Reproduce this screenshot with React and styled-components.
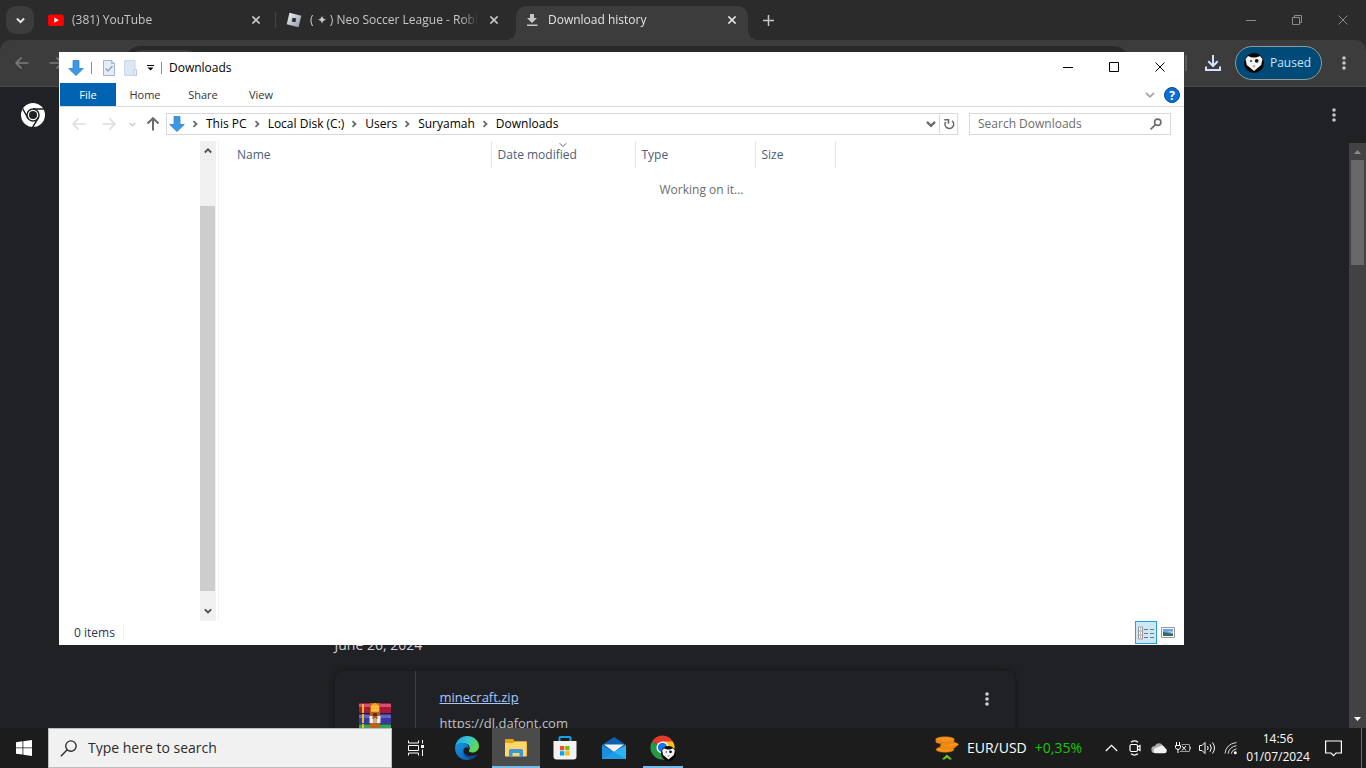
import React from "react";
import styled, { createGlobalStyle } from "styled-components";

const GlobalStyle = createGlobalStyle`
  * {
    box-sizing: border-box;
  }
  body {
    margin: 0;
    background: #202124;
    font-family: "Open Sans", "Noto Sans", sans-serif;
    font-size: 11px;
    line-height: 16px;
  }
  button, input {
    font: inherit;
    color: inherit;
    border: 0;
    padding: 0;
    margin: 0;
    background: none;
  }
  svg {
    display: block;
    flex: none;
  }
`;

const Desktop = styled.div`
  height: 100vh;
  display: flex;
  flex-direction: column;
  overflow: hidden;
`;

/* ---------- browser ---------- */

const Browser = styled.main`
  position: relative;
  flex: 1;
  min-height: 0;
  display: flex;
  flex-direction: column;
  background: #2b2b2b;
`;

const TabStrip = styled.header`
  height: 40px;
  flex: none;
  display: flex;
  align-items: flex-end;
  padding-left: 6px;
`;

const TabSearch = styled.button`
  width: 28px;
  height: 28px;
  margin: 0 6px 6px 0;
  border-radius: 10px;
  background: #3c3c3c;
  color: #e3e3e3;
  display: grid;
  place-items: center;
`;

const Tab = styled.div`
  position: relative;
  width: 232px;
  height: 34px;
  margin-right: 6px;
  padding: 0 8px 6px;
  display: flex;
  align-items: center;
  gap: 8px;
  font-size: 12px;
  color: ${(p) => (p.$active ? "#e3e3e3" : "#c7c7c7")};
  background: ${(p) => (p.$active ? "#3c3c3c" : "transparent")};
  border-radius: 10px 10px 0 0;

  ${(p) => p.$active && `
    &::before, &::after {
      content: "";
      position: absolute;
      bottom: 0;
      width: 10px;
      height: 10px;
    }
    &::before {
      right: 100%;
      background: radial-gradient(circle at 0 0, transparent 10px, #3c3c3c 10px);
    }
    &::after {
      left: 100%;
      background: radial-gradient(circle at 100% 0, transparent 10px, #3c3c3c 10px);
    }
  `}
`;

const TabTitle = styled.span`
  flex: 1;
  overflow: hidden;
  white-space: nowrap;
  mask-image: linear-gradient(to right, #000 90%, transparent);
`;

const TabDivider = styled.span`
  width: 1px;
  height: 16px;
  margin: 0 2px 12px -3px;
  background: #444444;
`;

const IconButton = styled.button`
  width: ${(p) => p.$w || 16}px;
  height: ${(p) => p.$h || 16}px;
  flex: none;
  display: grid;
  place-items: center;
`;

const NewTab = styled(IconButton)`
  margin-bottom: 6px;
`;

const Caption = styled.div`
  display: flex;
  align-self: flex-start;
  margin-left: auto;
  color: ${(p) => p.$color};
`;

const Toolbar = styled.nav`
  height: 47px;
  flex: none;
  display: flex;
  align-items: center;
  padding: 0 5px;
  background: #3c3c3c;
  border-bottom: 1px solid #4c4c4c;
  border-radius: 10px 10px 0 0;
  color: #7c7c7c;
`;

const Omnibox = styled.div`
  flex: 1;
  min-width: 0;
  height: 34px;
  margin: 0 39px 0 17px;
  padding: 0 5px;
  display: flex;
  align-items: center;
  border-radius: 17px;
  background: #282828;

  input {
    flex: 1;
    min-width: 0;
  }
`;

const SiteChip = styled.button`
  width: 70px;
  height: 26px;
  border-radius: 13px;
  background: #3c3c3c;
`;

const ToolbarDivider = styled.span`
  width: 2px;
  height: 16px;
  margin: 0 9px 0 16px;
  background: #5a5a5a;
`;

const Profile = styled.button`
  height: 34px;
  margin: 0 5px;
  padding: 0 10px 0 8px;
  display: flex;
  align-items: center;
  gap: 6px;
  border: 1px solid #8f9c9c;
  border-radius: 17px;
  background: #004a77;
  color: #c2e7ff;
  font-size: 12px;
`;

const PageBar = styled.div`
  height: 56px;
  flex: none;
  display: flex;
  align-items: center;
  justify-content: space-between;
  padding: 0 24px 0 21px;
  background: #202124;
  color: #c0c3c6;
`;

const PageBody = styled.div`
  flex: 1;
  min-height: 0;
  display: flex;
  background: #202124;
`;

const History = styled.section`
  flex: 1;
  overflow: hidden;
  display: flex;
  flex-direction: column;
  align-items: center;
  padding-top: 492px;
`;

const HistoryGroup = styled.div`
  width: 100%;
  max-width: 680px;
  color: #d0d2d5;
`;

const GroupDate = styled.h2`
  margin: 0 0 16px;
  font-size: 14px;
  font-weight: 400;
  line-height: 20px;
`;

const Card = styled.article`
  display: flex;
  height: 96px;
  border-radius: 8px;
  box-shadow: 0 0 5px #141518;
`;

const CardIcon = styled.div`
  width: 81px;
  display: grid;
  place-items: center;
  border-right: 1px solid #3f4043;
`;

const CardText = styled.div`
  flex: 1;
  padding: 16px 24px;
  display: flex;
  flex-direction: column;
  gap: 6px;
  font-size: 13px;
  line-height: 20px;
  color: #bdc1c6;
`;

const FileLink = styled.a`
  color: #a8c7fa;
  align-self: flex-start;
`;

const CardMenu = styled(IconButton)`
  margin: 16px 16px 0 0;
`;

const PageScroll = styled.div`
  width: 17px;
  display: flex;
  flex-direction: column;
  align-items: center;
  background: #424242;
`;

const PageThumb = styled.div`
  width: 13px;
  height: 105px;
  margin-bottom: auto;
  background: #686868;
`;

/* ---------- explorer window ---------- */

const Window = styled.section`
  position: absolute;
  inset: 52px 182px 83px 59px;
  display: flex;
  flex-direction: column;
  background: #ffffff;
  color: #000000;
`;

const TitleBar = styled.header`
  height: 31px;
  flex: none;
  display: flex;
  align-items: center;
  padding: 0 1px 0 9px;
`;

const Rule = styled.span`
  width: 1px;
  height: 12px;
  background: #8a8a8a;
  margin: ${(p) => p.$m};
`;

const WindowTitle = styled.span`
  margin-left: 7px;
  font-size: 12px;
`;

const Ribbon = styled.nav`
  height: 24px;
  flex: none;
  display: flex;
  align-items: center;
  padding: 0 4px 0 1px;
  border-bottom: 1px solid #dadbdc;
`;

const RibbonTab = styled.button`
  height: 23px;
  min-width: 58px;
  padding: 0 13px;
  color: #333333;
`;

const FileTab = styled(RibbonTab)`
  min-width: 56px;
  background: #0063b1;
  color: #ffffff;
`;

const RibbonEnd = styled.div`
  margin-left: auto;
  display: flex;
  align-items: center;
  gap: 9px;
  color: #a0a0a0;
`;

const AddressRow = styled.div`
  height: 34px;
  flex: none;
  display: flex;
  align-items: center;
  padding: 0 13px 0 12px;
`;

const NavButtons = styled.div`
  display: flex;
  align-items: center;
  gap: 11px;
  margin-left: 14px;
  color: #cccccc;
`;

const UpButton = styled(IconButton)`
  margin-left: 9px;
`;

const AddressBox = styled.div`
  flex: 1;
  height: 22px;
  margin: 0 11px 0 5px;
  padding-left: 2px;
  display: flex;
  align-items: center;
  border: 1px solid #d9d9d9;
  color: #6b6b6b;
`;

const CrumbLink = styled.a`
  margin: 0 0 0 6px;
  display: flex;
  align-items: center;
  gap: 7px;
  text-decoration: none;
  font-size: 12px;
  color: #6b6b6b;

  span {
    color: #000000;
  }
`;

const AddressEnd = styled.div`
  margin-left: auto;
  display: flex;
`;

const Refresh = styled(IconButton)`
  border-left: 1px solid #d9d9d9;
`;

const SearchBox = styled.label`
  width: 202px;
  height: 22px;
  padding: 0 8px;
  display: flex;
  align-items: center;
  border: 1px solid #d9d9d9;
  color: #6d6d6d;

  input {
    flex: 1;
    min-width: 0;
    outline: 0;
    font-size: 12px;
  }
  input::placeholder {
    color: #6d6d6d;
    opacity: 1;
  }
`;

const Panes = styled.div`
  flex: 1;
  min-height: 0;
  display: flex;
`;

const NavPane = styled.aside`
  width: 160px;
  padding-right: 2px;
  display: flex;
  justify-content: flex-end;
  border-right: 1px solid #f2f2f2;
`;

const NavScroll = styled.div`
  width: 16px;
  display: flex;
  flex-direction: column;
  background: #f0f0f0;
  color: #505050;
`;

const NavThumb = styled.div`
  flex: 1;
  margin: 45px 0 10px;
  width: 15px;
  background: #cdcdcd;
`;

const FileTable = styled.table`
  flex: 1;
  align-self: flex-start;
  table-layout: fixed;
  border-collapse: collapse;
  font-size: 12px;

  th {
    position: relative;
    height: 27px;
    padding: 0 0 0 6px;
    font-weight: 400;
    text-align: left;
    color: #4c607a;
    border-right: 1px solid #e5e5e5;
  }
  th:first-child {
    padding-left: 18px;
  }
  th:last-child {
    border: 0;
  }
  td {
    height: 44px;
    padding: 0;
    text-align: center;
    color: #6d6d6d;
  }
`;

const Col = styled.col`
  width: ${(p) => (p.$w ? `${p.$w}px` : "auto")};
`;

const SortMark = styled.span`
  position: absolute;
  top: 0;
  left: 50%;
  margin-left: -4px;
`;

const StatusBar = styled.footer`
  height: 24px;
  flex: none;
  display: flex;
  align-items: center;
  padding: 0 5px 0 15px;
  color: #1e395b;
  font-size: 12px;
`;

const Count = styled.span`
  margin-right: auto;
  padding-right: 8px;
  border-right: 1px solid #f0f0f0;
`;

const ViewButton = styled.button`
  width: 22px;
  height: 23px;
  align-self: flex-start;
  display: grid;
  place-items: center;
  background: ${(p) => (p.$on ? "#cce8f6" : "transparent")};
  border: 1px solid ${(p) => (p.$on ? "#26a0da" : "transparent")};
`;

/* ---------- taskbar ---------- */

const Taskbar = styled.footer`
  height: 40px;
  flex: none;
  display: flex;
  align-items: center;
  background: #1c1c1c;
  color: #ffffff;
  font-size: 12px;
`;

const TaskSearch = styled.label`
  width: 344px;
  height: 40px;
  padding: 0 11px;
  display: flex;
  align-items: center;
  gap: 11px;
  background: #f1f1f1;
  border: 1px solid #bdbdbd;
  color: #2b2b2b;

  input {
    flex: 1;
    min-width: 0;
    font-size: 14px;
    outline: 0;
  }
  input::placeholder {
    color: #2b2b2b;
    opacity: 1;
  }
`;

const Pinned = styled.div`
  display: flex;
  gap: 1px;
  margin-left: 3px;
`;

const TaskButton = styled.button`
  width: 48px;
  height: 40px;
  display: grid;
  place-items: center;
  background: ${(p) => (p.$active ? "#4b4b4b" : "transparent")};
  box-shadow: ${(p) => (p.$active ? "inset 0 -2px #76b9ed" : "none")};
`;

const RunningButton = styled(TaskButton)`
  background: linear-gradient(#76b9ed, #76b9ed) center bottom / 40px 2px no-repeat;
`;

const Ticker = styled.button`
  height: 40px;
  margin-left: auto;
  display: flex;
  align-items: center;
  gap: 8px;
  font-size: 14px;
`;

const Gain = styled.span`
  color: #16c60c;
`;

const Tray = styled.div`
  display: flex;
  margin-left: 17px;
`;

const Clock = styled.time`
  width: 70px;
  text-align: center;
  line-height: 18px;
`;

const ShowDesktop = styled.button`
  width: 5px;
  height: 40px;
  margin-left: 8px;
  border-left: 1px solid #6a6a6a;
`;

/* ---------- icons ---------- */

const Close = ({ size = 10, w = 1 }) => (
  <svg width={size} height={size} viewBox="0 0 10 10" stroke="currentColor" strokeWidth={w}>
    <path d="M.5 .5l9 9M9.5 .5l-9 9" />
  </svg>
);

const chevrons = {
  down: "M.8 2.3L4 5.5l3.2-3.2",
  up: "M.8 5.5L4 2.3l3.2 3.2",
  right: "M2.5 1.2L5.5 4l-3 2.8",
};

const Chevron = ({ dir = "down", size = 8, w = 1.5 }) => (
  <svg width={size} height={size} viewBox="0 0 8 8" fill="none" stroke="currentColor" strokeWidth={w}>
    <path d={chevrons[dir]} />
  </svg>
);

const Arrow = ({ rotate = 0, color = "currentColor", w = 1.7 }) => (
  <svg width="14" height="14" viewBox="0 0 14 14" fill="none" stroke={color} strokeWidth={w}>
    <path d="M13.5 7H1.5M6.5 1.5L1.2 7l5.3 5.5" transform={`rotate(${rotate} 7 7)`} />
  </svg>
);

const Dots = () => (
  <svg width="4" height="14" viewBox="0 0 4 14" fill="currentColor">
    <circle cx="2" cy="2" r="1.8" />
    <circle cx="2" cy="7" r="1.8" />
    <circle cx="2" cy="12" r="1.8" />
  </svg>
);

const BlueArrow = () => (
  <svg width="16" height="16" viewBox="0 0 16 16">
    <path d="M5 .5h6v8h4.3L8 15.6.7 8.5H5z" fill="#3a98e6" stroke="#2a79c0" strokeWidth=".7" />
  </svg>
);

const Minimize = () => (
  <svg width="10" height="10" stroke="currentColor">
    <path d="M0 5.500h10" />
  </svg>
);

const Lens = ({ size, w, r = 4.9 }) => (
  <svg width={size} height={size} viewBox="0 0 16 16" fill="none" stroke="currentColor" strokeWidth={w}>
    <circle cx="10.300" cy="5.700" r={r} />
    <path d="M6.800 9.200L.8 15.200" />
  </svg>
);

const RefreshIcon = () => (
  <svg width="12" height="12" viewBox="0 0 12 12" fill="none" stroke="#6b6b6b" strokeWidth="1.600">
    <path d="M9 2.800A4.300 4.300 0 1 1 2.600 4M1.200 1.800h4.300v4" />
  </svg>
);

const Avatar = ({ size = 20 }) => (
  <svg width={size} height={size} viewBox="0 0 20 20">
    <circle cx="10" cy="10" r="10" fill="#050505" />
    <path d="M1.500 6L4 3l2.500 1h7L16 3l2.500 3-1.300 6L10 18l-7.200-6z" fill="#f4f4f4" />
    <path d="M6.500 2.500h7L12.500 4.500h-5z" fill="#111" />
    <circle cx="7" cy="8" r=".9" fill="#222" />
    <circle cx="12.700" cy="7.800" r="1.900" fill="#151515" />
    <path d="M8.300 12.500h3.400L10 14.700z" fill="#b98090" />
  </svg>
);

const YouTube = () => (
  <svg width="16" height="16" viewBox="0 0 16 16">
    <rect y="2.500" width="16" height="11.500" rx="2.800" fill="#f00" />
    <path d="M6.300 5.600v5.200L10.800 8.200z" fill="#fff" />
  </svg>
);

const Roblox = () => (
  <svg width="16" height="16" viewBox="0 0 16 16">
    <defs>
      <linearGradient id="rbx" x1="0" y1="0" x2="1" y2="1">
        <stop offset="0" stopColor="#f2f4f7" />
        <stop offset="1" stopColor="#8c98a5" />
      </linearGradient>
    </defs>
    <path d="M3.500.8L15.300 3.700 12.500 15.200.7 12.300z" fill="url(#rbx)" />
    <path d="M6.600 5.700l3.700.9-.9 3.700-3.700-.9z" fill="#2b2b2b" />
  </svg>
);

const TabDownload = () => (
  <svg width="16" height="16" viewBox="0 0 16 16" fill="#c7c7c7">
    <path d="M6 2h4v4h3L8 11 3 6h3zM3 12.500h10.500V14H3z" />
  </svg>
);

const ToolbarDownload = () => (
  <svg width="18" height="18" viewBox="0 0 18 18" fill="none" stroke="#d3e3fd" strokeWidth="2">
    <path d="M9 1v10.500M4.300 7.300L9 12l4.700-4.700M2 12.500v3.500h14v-3.500" />
  </svg>
);

const ChromeMono = () => (
  <svg width="24" height="24" viewBox="0 0 24 24">
    <circle cx="12" cy="12" r="12" fill="#fff" />
    <g stroke="#202124" strokeWidth="1.500" fill="none">
      <circle cx="12" cy="12" r="6" fill="#fff" />
      <path d="M12 6h11.500M6.800 15L1.600 5.500M17.200 15L11.500 24.500" />
    </g>
    <circle cx="12" cy="12" r="4" fill="#202124" />
  </svg>
);

const WinRar = () => (
  <svg width="32" height="32" viewBox="0 0 32 32">
    <rect width="32" height="10" rx="1" fill="#a8183a" />
    <rect y="1" width="32" height="3" fill="#d8506c" />
    <rect y="11" width="32" height="10" rx="1" fill="#3b3a98" />
    <rect y="12" width="32" height="3" fill="#6464c4" />
    <rect y="21" width="32" height="10" rx="1" fill="#18733a" />
    <rect y="22" width="32" height="3" fill="#35a35c" />
    <path d="M3 1h2v9H3zM3 11h2v9H3zM3 21h2v9H3z" fill="#f2b821" />
    <rect x="11" width="10" height="32" fill="#b8651b" />
    <path d="M12 2l4-2 4 2v7H12z" fill="#f6a821" />
    <path d="M12 4h8M12 7h8" stroke="#ffd977" />
    <path d="M14 10h4v3h-4z" fill="#5b2b0c" />
    <path d="M10.500 13h3v3h5v-3h3v7h-11z" fill="#eeeeee" />
    <path d="M14.500 14h3v6h-3z" fill="#a85418" />
    <path d="M16 15v5" stroke="#fff" />
  </svg>
);

const DocCheck = () => (
  <svg width="12" height="16" viewBox="0 0 12 16">
    <path d="M.5.500h8l3 3v12H.500z" fill="#e6edf7" stroke="#a5b4cf" />
    <path d="M8.500.500v3h3" fill="none" stroke="#a5b4cf" />
    <path d="M2.500 8.500l2.500 2.500 4.500-5" fill="none" stroke="#94a6c4" strokeWidth="1.500" />
  </svg>
);

const DocFolder = () => (
  <svg width="13" height="16" viewBox="0 0 13 16">
    <path d="M.5.500h10.500v9h1.500v6H.500z" fill="#dde6f4" stroke="#cdd8ea" />
    <path d="M10 15.500V9.500h2.500v6z" fill="#eef3fa" stroke="#bccae2" />
  </svg>
);

const WindowsLogo = () => (
  <svg width="16" height="16" viewBox="0 0 16 16" fill="#fff">
    <path d="M0 2.200L6.500 1.300v6.200H0zM7.300 1.200L16 0v7.500H7.300zM0 8.300h6.500v6.300L0 13.700zM7.300 8.300H16V16l-8.700-1.300z" />
  </svg>
);

const TaskView = () => (
  <svg width="17" height="16" viewBox="0 0 17 16" fill="none" stroke="#fff">
    <path d="M.5.500v2.500h10V.500M.5 15.500V13h10v2.500M.5 5.500h10v5H.500zM14.500 0v3.500M14.500 9.500V16" />
    <path d="M13 5h3v3h-3z" fill="#fff" stroke="none" />
  </svg>
);

const Edge = () => (
  <svg width="24" height="24" viewBox="0 0 24 24">
    <defs>
      <linearGradient id="edgeTop" x1="0" y1="0" x2="1" y2=".4">
        <stop offset="0" stopColor="#1b9de2" />
        <stop offset=".5" stopColor="#32c4dd" />
        <stop offset="1" stopColor="#63d94c" />
      </linearGradient>
      <linearGradient id="edgeLow" x1="0" y1="0" x2="1" y2="1">
        <stop offset="0" stopColor="#1795e3" />
        <stop offset="1" stopColor="#0c5bb0" />
      </linearGradient>
    </defs>
    <path d="M.3 10.500C1 4.500 6 0 12 0c7 0 12 5 12 10 0 4-3 6.500-6.500 6.500-2.500 0-4-1-3.500-2 1.500-2 1-5-2-6.500C8 6 3 7 .3 10.500z" fill="url(#edgeTop)" />
    <path d="M.2 10.800C2.500 7 7 6 10.500 7.500c3 1.300 3.500 3.700 3 5.300C12.500 10.500 9 11 8.500 14c-.5 4 3 9 9.500 8.300C16 23.400 14 24 12 24 5 24-.8 18 .2 10.800z" fill="url(#edgeLow)" />
    <path d="M8.500 14c-.5 5 6 8 12.500 4.500.6-.3 1 .2.700.700-1 1.600-2.500 2.700-3.700 3.200C12 24.500 7 19 8.500 14z" fill="#0c4a94" />
  </svg>
);

const Folder = () => (
  <svg width="22" height="18" viewBox="0 0 22 18">
    <path d="M0 1q0-1 1-1h7l2 2.500H21q1 0 1 1V17H0z" fill="#e5a50f" />
    <path d="M0 4h8l2-1.500h11.500V17.500H0z" fill="#ffd667" />
    <path d="M4 18v-6.500q0-1.500 1.500-1.500h11q1.500 0 1.500 1.500V18h-3.500v-4h-7v4z" fill="#3a96dd" />
  </svg>
);

const Store = () => (
  <svg width="24" height="24" viewBox="0 0 24 24">
    <path d="M6.500 6V2q0-1 1-1h9q1 0 1 1v4" fill="none" stroke="#1ba3e0" strokeWidth="2" />
    <path d="M.500 5h23v15.500q0 3-3 3h-17q-3 0-3-3z" fill="#f3f3f3" />
    <path d="M7 10h4.300v4.300H7z" fill="#f25022" />
    <path d="M12.200 10h4.300v4.300h-4.300z" fill="#7fba00" />
    <path d="M7 15.200h4.300v4.300H7z" fill="#00a4ef" />
    <path d="M12.200 15.200h4.300v4.300h-4.300z" fill="#ffb900" />
  </svg>
);

const Mail = () => (
  <svg width="24" height="22" viewBox="0 0 24 22">
    <path d="M0 8L12 0l12 8v14H0z" fill="#1160b0" />
    <path d="M2 7.500h20L12 15z" fill="#f2f2f2" />
    <path d="M0 8l12 7L0 22z" fill="#1b8fdd" />
    <path d="M24 8v14H0l12-7z" fill="#2cb4f2" />
    <path d="M0 22l12-7 12 7z" fill="#1f9ce6" />
  </svg>
);

const Chrome = () => (
  <svg width="26" height="26" viewBox="0 0 26 26">
    <path d="M12.500 12.500L2.100 6.500A12 12 0 0 1 22.900 6.500z" fill="#e33b2e" />
    <path d="M12.500 12.500V6.500H22.900A12 12 0 0 1 12.500 24.500z" fill="#fbc116" />
    <path d="M12.500 12.500V24.500A12 12 0 0 1 2.100 6.500z" fill="#279847" />
    <circle cx="12.500" cy="12.500" r="6" fill="#fff" />
    <circle cx="12.500" cy="12.500" r="4.700" fill="#1a73e8" />
    <svg x="11" y="11" width="15" height="15">
      <Avatar size={15} />
    </svg>
  </svg>
);

const Coins = () => (
  <svg width="24" height="24" viewBox="0 0 24 24">
    <g fill="#f7931a" stroke="#c96a0c" strokeWidth=".5">
      <ellipse cx="10" cy="13.500" rx="9" ry="2.800" />
      <ellipse cx="13" cy="10.500" rx="8" ry="2.600" />
      <ellipse cx="14.500" cy="8.500" rx="9" ry="2.600" />
      <ellipse cx="10" cy="5.500" rx="9.500" ry="2.600" />
      <ellipse cx="10" cy="3.500" rx="9.500" ry="2.800" />
    </g>
    <path d="M7 23l5-4.500 5 4.500-2 .8-3-2-3 2z" fill="#6dc01e" />
  </svg>
);

const MeetNow = () => (
  <svg width="12" height="16" viewBox="0 0 12 16" fill="none" stroke="#fff" strokeWidth="1.200">
    <rect x="1" y="4.500" width="7.500" height="7" rx="1.500" />
    <path d="M8.500 7l2.500-1.500v5l-2.500-1.500M2 2.200Q5.500-.300 9 2.200M2 13.800q3.500 2.500 7 0" />
  </svg>
);

const Cloud = () => (
  <svg width="17" height="12" viewBox="0 0 17 12">
    <path d="M4 11a3.500 3.500 0 0 1-.3-7A4.800 4.800 0 0 1 12 3.500L13 7z" fill="#a9a9a9" />
    <path d="M4 11.300a3 3 0 0 1 1-5.500l5-2q3-.8 4 2.200a2.800 2.800 0 0 1-.2 5.300z" fill="#f2f2f2" />
  </svg>
);

const Battery = () => (
  <svg width="17" height="12" viewBox="0 0 17 12" fill="none" stroke="#fff">
    <path d="M1.500 0v3M4.500 0v3M.500 3.500h5v2q-.5 2-2.500 2t-2.500-2zM3 7.500V11" />
    <path d="M6.500 2.500h8v7H5M15.500 4.500v3" stroke="#9a9a9a" />
    <path d="M7 4l4 4.500M11 4L7 8.500" />
  </svg>
);

const Speaker = () => (
  <svg width="17" height="14" viewBox="0 0 17 14" fill="none" stroke="#fff">
    <path d="M.5 4.500h2.500l3-3v11l-3-3H.500zM8.500 5q1.300 2 0 4M11 3.200q2.700 3.800 0 7.600M13.500 1.500q4 5.500 0 11" />
  </svg>
);

const Wifi = () => (
  <svg width="14" height="14" viewBox="0 0 14 14" fill="none" stroke="#d8d8d8">
    <path d="M1 12.500Q2 3 12.500 1.500M4 12.800Q5 6 12.500 4.600M7 12.800q.800-4 5.500-5" />
    <circle cx="11.300" cy="11.700" r="1.500" fill="#fff" stroke="none" />
  </svg>
);

const Note = () => (
  <svg width="17" height="17" viewBox="0 0 17 17" fill="none" stroke="#fff" strokeWidth="1.200">
    <path d="M.6 1h15.800v12H11l-2.500 2.600L6 13H.600z" />
  </svg>
);

const Details = () => (
  <svg width="16" height="14" viewBox="0 0 16 14" fill="none">
    <path d="M.5 1h4v12h-4zM.5 5h4M.5 9h4" fill="#fff" stroke="#999" />
    <path d="M6 3.500h4M12 3.500h4M6 7.500h4M12 7.500h4M6 11.500h4M12 11.500h4" stroke="#777" />
    <path d="M2 2.500h1v1H2z" fill="#777" />
    <path d="M2 6.500h1v1H2z" fill="#2a7de1" />
    <path d="M2 10.500h1v1H2z" fill="#d42a2a" />
  </svg>
);

const Thumbs = () => (
  <svg width="14" height="11" viewBox="0 0 14 11">
    <path d="M.5.500h13v10H.500z" fill="#fff" stroke="#999" />
    <path d="M2 2h10v7H2z" fill="#6aa5ee" />
    <path d="M2 5l3 .5 7 1.500v2H2z" fill="#3c6a5b" />
    <path d="M6 4.500h6v1.500z" fill="#d5e6fa" />
  </svg>
);

/* ---------- parts ---------- */

const tabs = [
  { title: "(381) YouTube", icon: <YouTube /> },
  { title: "( ✦ ) Neo Soccer League - Roblox", icon: <Roblox /> },
  { title: "Download history", icon: <TabDownload />, active: true },
];

const crumbs = ["This PC", "Local Disk (C:)", "Users", "Suryamah", "Downloads"];

const CaptionButtons = ({ h, restore, color }) => (
  <Caption $color={color}>
    <IconButton $w={46} $h={h} aria-label="Minimize"><Minimize /></IconButton>
    <IconButton $w={46} $h={h} aria-label="Maximize">
      <svg width="10" height="10" fill="none" stroke="currentColor">
        {restore
          ? <path d="M.5 2.500h7v7h-7zM2.500 2.500v-2h7v7h-2" />
          : <path d="M.5.500h9v9h-9z" />}
      </svg>
    </IconButton>
    <IconButton $w={46} $h={h} aria-label="Close"><Close /></IconButton>
  </Caption>
);

const Explorer = () => (
  <Window>
    <TitleBar>
      <BlueArrow />
      <Rule $m="0 11px 0 7px" />
      <DocCheck />
      <IconButton $w={31} aria-label="New folder"><DocFolder /></IconButton>
      <svg width="9" height="7" viewBox="0 0 9 7">
        <path d="M1 1.500h7" stroke="#000" />
        <path d="M1.500 3.500h6l-3 3z" />
      </svg>
      <Rule $m="0 0 0 6px" />
      <WindowTitle>Downloads</WindowTitle>
      <CaptionButtons h={30} color="#000000" />
    </TitleBar>
    <Ribbon>
      <FileTab>File</FileTab>
      <RibbonTab>Home</RibbonTab>
      <RibbonTab>Share</RibbonTab>
      <RibbonTab>View</RibbonTab>
      <RibbonEnd>
        <Chevron size={10} w={1.2} />
        <svg width="16" height="16" viewBox="0 0 16 16">
          <circle cx="8" cy="8" r="7.500" fill="#0a6fd0" stroke="#064e98" />
          <text x="8" y="12.500" textAnchor="middle" fontSize="12" fontWeight="700" fill="#fff">?</text>
        </svg>
      </RibbonEnd>
    </Ribbon>
    <AddressRow>
      <IconButton aria-label="Back"><Arrow color="#dedede" /></IconButton>
      <NavButtons>
        <IconButton aria-label="Forward"><Arrow color="#dedede" rotate={180} /></IconButton>
        <IconButton $w={8} aria-label="Recent locations"><Chevron size={7} /></IconButton>
      </NavButtons>
      <UpButton aria-label="Up"><Arrow color="#6b6b6b" rotate={90} w={2} /></UpButton>
      <AddressBox>
        <BlueArrow />
        {crumbs.map((name) => (
          <CrumbLink href="#" key={name}>
            <Chevron dir="right" w={1.8} />
            <span>{name}</span>
          </CrumbLink>
        ))}
        <AddressEnd>
          <IconButton $h={20} aria-label="Previous locations"><Chevron size={10} w={1.8} /></IconButton>
          <Refresh $w={18} $h={20} aria-label="Refresh"><RefreshIcon /></Refresh>
        </AddressEnd>
      </AddressBox>
      <SearchBox>
        <input type="search" placeholder="Search Downloads" />
        <Lens size={12} w={2.2} r={4.200} />
      </SearchBox>
    </AddressRow>
    <Panes>
      <NavPane>
        <NavScroll>
          <IconButton $h={20} aria-label="Scroll up"><Chevron dir="up" w={1.8} /></IconButton>
          <NavThumb />
          <IconButton $h={20} aria-label="Scroll down"><Chevron w={1.8} /></IconButton>
        </NavScroll>
      </NavPane>
      <FileTable>
        <colgroup>
          <Col $w={272} />
          <Col $w={144} />
          <Col $w={120} />
          <Col $w={80} />
          <Col />
        </colgroup>
        <thead>
          <tr>
            <th>Name</th>
            <th>Date modified<SortMark><Chevron w={1} /></SortMark></th>
            <th>Type</th>
            <th>Size</th>
            <th aria-label="More" />
          </tr>
        </thead>
        <tbody>
          <tr><td colSpan={5}>Working on it...</td></tr>
        </tbody>
      </FileTable>
    </Panes>
    <StatusBar>
      <Count>0 items</Count>
      <ViewButton $on aria-label="Details"><Details /></ViewButton>
      <ViewButton aria-label="Large icons"><Thumbs /></ViewButton>
    </StatusBar>
  </Window>
);

const App = () => {
  return (
    <>
      <GlobalStyle />
      <Desktop>
        <Browser>
          <TabStrip>
            <TabSearch aria-label="Search tabs"><Chevron size={9} w={1.8} /></TabSearch>
            {tabs.map((tab, i) => (
              <React.Fragment key={tab.title}>
                {i === 1 && <TabDivider />}
                <Tab $active={tab.active}>
                  {tab.icon}
                  <TabTitle>{tab.title}</TabTitle>
                  <IconButton aria-label="Close tab"><Close size={8} w={2} /></IconButton>
                </Tab>
              </React.Fragment>
            ))}
            <NewTab $w={28} $h={28} aria-label="New tab">
              <svg width="11" height="11" stroke="#c7c7c7" strokeWidth="1.500">
                <path d="M5.500 0v11M0 5.500h11" />
              </svg>
            </NewTab>
            <CaptionButtons h={40} restore color="#8b8b8b" />
          </TabStrip>
          <Toolbar>
            <IconButton $w={34} $h={34} aria-label="Back"><Arrow /></IconButton>
            <IconButton $w={34} $h={34} aria-label="Forward"><Arrow rotate={180} /></IconButton>
            <IconButton $w={34} $h={34} aria-label="Reload" />
            <Omnibox>
              <SiteChip aria-label="Site information" />
              <input aria-label="Address" />
            </Omnibox>
            <ToolbarDivider />
            <IconButton $w={34} $h={34} aria-label="Downloads"><ToolbarDownload /></IconButton>
            <Profile><Avatar />Paused</Profile>
            <IconButton $w={34} $h={34} aria-label="Menu"><DotsLight><Dots /></DotsLight></IconButton>
          </Toolbar>
          <PageBar>
            <ChromeMono />
            <IconButton aria-label="More actions"><Dots /></IconButton>
          </PageBar>
          <PageBody>
            <History>
              <HistoryGroup>
                <GroupDate>June 26, 2024</GroupDate>
                <Card>
                  <CardIcon><WinRar /></CardIcon>
                  <CardText>
                    <FileLink href="#">minecraft.zip</FileLink>
                    <span>https://dl.dafont.com</span>
                  </CardText>
                  <CardMenu $w={24} $h={24} aria-label="File actions"><Dots /></CardMenu>
                </Card>
              </HistoryGroup>
            </History>
            <PageScroll>
              <IconButton $h={17} aria-label="Page up">
                <svg width="7" height="4" fill="#8b8b8b"><path d="M0 4L3.500 0 7 4z" /></svg>
              </IconButton>
              <PageThumb />
              <IconButton $h={18} aria-label="Page down">
                <svg width="7" height="4" fill="#fff"><path d="M0 0h7L3.500 4z" /></svg>
              </IconButton>
            </PageScroll>
          </PageBody>
          <Explorer />
        </Browser>

        <Taskbar>
          <TaskButton aria-label="Start"><WindowsLogo /></TaskButton>
          <TaskSearch>
            <Lens size={17} w={1.3} />
            <input type="search" placeholder="Type here to search" />
          </TaskSearch>
          <TaskButton aria-label="Task view"><TaskView /></TaskButton>
          <Pinned>
            <TaskButton aria-label="Edge"><Edge /></TaskButton>
            <TaskButton $active aria-label="File Explorer"><Folder /></TaskButton>
            <TaskButton aria-label="Store"><Store /></TaskButton>
            <TaskButton aria-label="Mail"><Mail /></TaskButton>
            <RunningButton aria-label="Chrome"><Chrome /></RunningButton>
          </Pinned>
          <Ticker>
            <Coins />
            <span>EUR/USD</span>
            <Gain>+0,35%</Gain>
          </Ticker>
          <Tray>
            <IconButton $w={24} $h={40} aria-label="Hidden icons">
              <svg width="13" height="8" fill="none" stroke="#fff" strokeWidth="1.300">
                <path d="M.8 7L6.500 1.300 12.200 7" />
              </svg>
            </IconButton>
            <IconButton $w={24} $h={40} aria-label="Meet now"><MeetNow /></IconButton>
            <IconButton $w={24} $h={40} aria-label="OneDrive"><Cloud /></IconButton>
            <IconButton $w={24} $h={40} aria-label="Battery"><Battery /></IconButton>
            <IconButton $w={24} $h={40} aria-label="Volume"><Speaker /></IconButton>
            <IconButton $w={24} $h={40} aria-label="Network"><Wifi /></IconButton>
          </Tray>
          <Clock>14:56<br />01/07/2024</Clock>
          <IconButton $w={40} $h={40} aria-label="Notifications"><Note /></IconButton>
          <ShowDesktop aria-label="Show desktop" />
        </Taskbar>
      </Desktop>
    </>
  );
};

const DotsLight = styled.span`
  color: #c7c7c7;
`;

export default App;
